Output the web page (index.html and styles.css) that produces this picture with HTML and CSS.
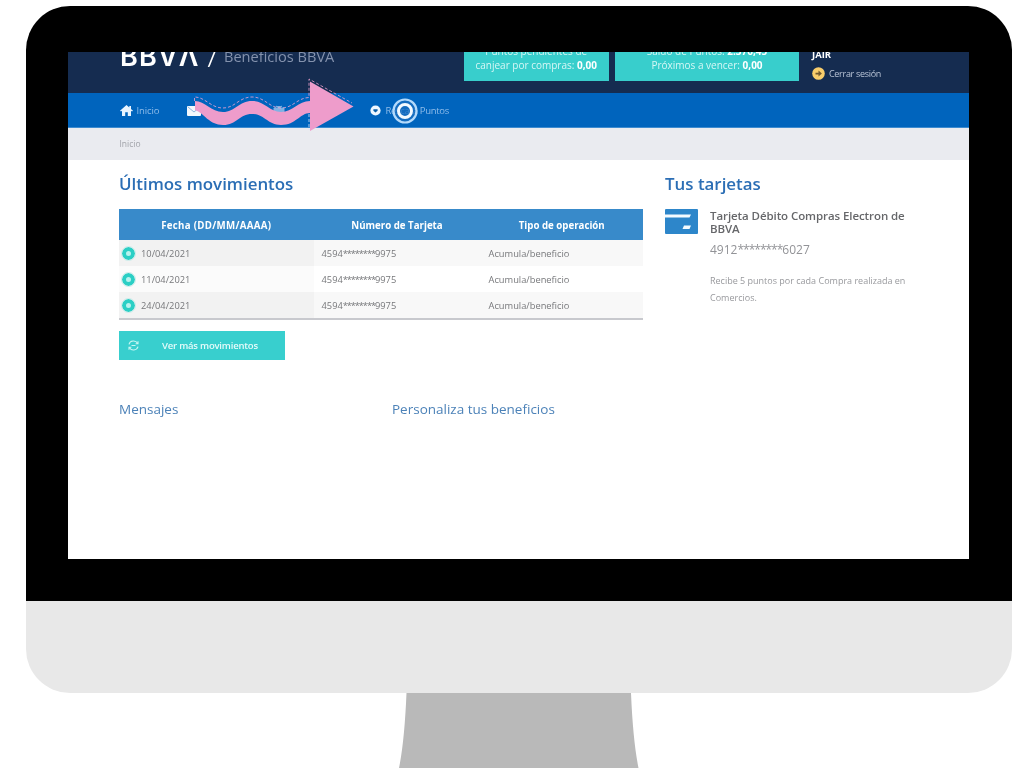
FILE: index.html
```html
<!DOCTYPE html>
<html lang="es">
<head>
<meta charset="utf-8">
<title>Beneficios BBVA</title>
<link rel="stylesheet" href="styles.css">
</head>
<body>
<div class="monitor">
  <div class="bezel">
    <main class="screen">
      <header class="header">
        <div class="brand"><span class="logo">BBVΛ</span><span class="slash">/</span><span class="product">Beneficios BBVA</span></div>
        <div class="box box-pending"><span>Puntos pendientes de</span><span>canjear por compras: <b>0,00</b></span></div>
        <div class="box box-total"><span>Saldo de Puntos: <b>2.376,45</b></span><span>Próximos a vencer: <b>0,00</b></span></div>
        <div class="user">
          <b class="user-name">JAIR</b>
          <a class="logout"><svg width="13" height="13" viewBox="0 0 13 13"><circle cx="6.5" cy="6.5" r="6.3" fill="#f8cd6b"/><path d="M3.5 5.7h3V3.5l3.4 3-3.4 3V7.4h-3z" fill="#735a2e"/></svg><span>Cerrar sesión</span></a>
        </div>
      </header>
      <nav class="nav">
        <a class="nav-home"><svg width="13" height="11" viewBox="0 0 13 11"><path d="M6.5 0 0 5.7l1 .9 1-.8V11h3.2V7.2h2.6V11H11V5.8l1 .8 1-.9-2-1.8V1H9.3v1.4z" fill="#e9f4ff"/></svg><span>Inicio</span></a>
        <svg class="nav-mail" width="14" height="10" viewBox="0 0 14 10"><rect width="14" height="10" rx="1" fill="#f2f7fd"/><path d="m1 1 6 5 6-5" fill="none" stroke="#8fb5de" stroke-width="1"/></svg>
        <svg class="nav-gift" width="12" height="11" viewBox="0 0 12 11"><path d="M1 3h10v7H1zM3 1l3 2 3-2" fill="#7fb2e4" stroke="#7fb2e4"/></svg>
        <a class="nav-points"><svg width="11" height="11" viewBox="0 0 11 11"><circle cx="5.5" cy="5.5" r="5.1" fill="#eef7ff"/><path d="M3.4 4.2h4.2v1.600L5.500 7.400 3.400 5.800z" fill="#075da9"/></svg><span>Rescata Puntos</span></a>
      </nav>
      <div class="crumbs">Inicio</div>
      <div class="content">
        <section class="movements">
          <h1 class="title">Últimos movimientos</h1>
          <div class="table">
            <div class="row head"><span>Fecha (DD/MM/AAAA)</span><span>Número de Tarjeta</span><span>Tipo de operación</span></div>
            <div class="row odd"><span class="date"><i class="dot"></i>10/04/2021</span><span class="card-no">4594<em>********</em>9975</span><span class="kind">Acumula/beneficio</span></div>
            <div class="row"><span class="date"><i class="dot"></i>11/04/2021</span><span class="card-no">4594<em>********</em>9975</span><span class="kind">Acumula/beneficio</span></div>
            <div class="row odd"><span class="date"><i class="dot"></i>24/04/2021</span><span class="card-no">4594<em>********</em>9975</span><span class="kind">Acumula/beneficio</span></div>
          </div>
          <a class="more"><svg width="11" height="11" viewBox="0 0 11 11" fill="none" stroke="#c9f6f3" stroke-width="1.1"><path d="M1 4.3C2 .2 8 0 9.5 3.4M10 1.200v2.500H7.600M10 6.700C9 10.800 3 11 1.500 7.600M1 9.800V7.300h2.400M3.500 5.500h4"/></svg><span>Ver más movimientos</span></a>
          <div class="subheads"><h2>Mensajes</h2><h2>Personaliza tus beneficios</h2></div>
        </section>
        <aside class="cards">
          <h1 class="title">Tus tarjetas</h1>
          <div class="card">
            <svg width="33" height="25" viewBox="0 0 33 25"><rect width="33" height="25" rx="1" fill="#2d86ca"/><path d="M0 5.500h26l-1.500 3H0zM19 16.500h7l-1.500 3.500h-7z" fill="#f5fbff"/></svg>
            <div class="card-text">
              <h3>Tarjeta Débito Compras Electron de BBVA</h3>
              <div class="number">4912<em>********</em>6027</div>
              <p>Recibe 5 puntos por cada Compra realizada en Comercios.</p>
            </div>
          </div>
        </aside>
      </div>
    </main>
  </div>
  <div class="chin"></div>
  <svg class="stand" width="240" height="75" viewBox="0 0 240 75"><path d="M7.500 0H232Q234 48 239.500 75H0Q5.500 48 7.500 0z" fill="#b9b9b9"/></svg>
</div>
<svg class="pointer" width="165" height="60" viewBox="190 75 165 60">
  <path d="M194.500 101V97C205 97 211 108 223 108C235 108 239 97 252 97C265 97 269 108 281 108C293 108 297 98 309 97.500V79L352 103" fill="none" stroke="#f3a5d2" stroke-width=".8" stroke-dasharray="3 2"/>
  <path d="M195 101C205 101 211 112 223 112C235 112 239 101 252 101C265 101 269 112 281 112C293 112 298 101 310 101V81.500L353.500 106.500 310 131V113C300 113 296 125 281 125C267 125 265 114 252 114C239 114 237 125 223 125C209 125 204 113 195 110z" fill="#ee9ccb"/>
  <path d="M309 114v16" stroke="#d8e2fa" stroke-width=".8" stroke-dasharray="3 2"/>
</svg>
<svg class="cursor" width="28" height="28" viewBox="0 0 28 28" fill="none"><circle cx="14" cy="14" r="11.500" fill="#1b6fc0" fill-opacity=".75" stroke="#b4dafb" stroke-width="2.200"/><circle cx="14" cy="14" r="6.500" stroke="#f4faff" stroke-width="3"/></svg>
</body>
</html>
```

FILE: styles.css
```css
* { box-sizing: border-box; }
body { margin: 0; width: 1024px; height: 768px; overflow: hidden; background: #fff; font-family: "Open Sans", "Noto Sans", sans-serif; }
h1, h2, h3, p { margin: 0; }
span, b, h1, h2 { white-space: nowrap; }
svg { display: block; flex: none; }
em { font-style: normal; letter-spacing: -1.1px; }
.monitor { margin: 6px 12px 0 26px; display: flex; flex-direction: column; }
.bezel { height: 595px; padding: 46px 43px 42px 41.500px; background: #000; border-radius: 44px 44px 0 0; }
.chin { height: 92px; background: #e8e8e8; border-radius: 0 0 44px 44px; }
.stand { margin-left: 373px; }
.screen { height: 507px; overflow: hidden; background: #fff; }
.header, .nav, .crumbs, .content { filter: blur(.35px); }
.header { height: 41px; background: #152c50; display: flex; overflow: hidden; color: #fff; }
.brand { width: 396px; padding-left: 52.500px; display: flex; align-items: flex-end; height: 16px; }
.logo { font: 600 27px/26px Inter, sans-serif; width: 86px; margin-bottom: -2px; letter-spacing: 1.200px; }
.slash { font: 400 23px/24px Lato, sans-serif; width: 17px; margin-left: 1px; margin-bottom: -1px; }
.product { font-size: 14.600px; line-height: 20px; color: #8492ad; margin-bottom: 2px; }
.box { height: 28.500px; background: #38cecc; color: #d6f7f5; font-size: 10px; line-height: 14px; display: flex; flex-direction: column; align-items: center; justify-content: flex-end; padding-bottom: 8.500px; }
.box b { color: #fff; }
.box-pending { width: 145.500px; }
.box-total { width: 184px; margin-left: 6px; }
.user { margin-left: 13px; display: flex; flex-direction: column; height: 27.500px; justify-content: flex-end; }
.user-name { font-size: 9.500px; line-height: 12px; margin-bottom: 5.500px; }
.logout { display: flex; align-items: center; gap: 4px; font-size: 9px; letter-spacing: -.3px; line-height: 13px; color: #b9c4d6; }
.nav { height: 34.500px; background: #0064bd; border-bottom: 1px solid #3d8bd0; display: flex; align-items: center; padding: 2px 0 0 52px; font-size: 9.500px; color: #8ebcea; }
.nav a { display: flex; align-items: center; }
.nav-home { width: 67px; gap: 4px; letter-spacing: -.1px; }
.nav-gift { margin-left: 72px; }
.nav-points { margin-left: 85px; gap: 5px; letter-spacing: -.3px; }
.crumbs { height: 32px; background: #eaebf0; padding: 9px 0 0 52px; font-size: 8.500px; line-height: 14px; color: #a1a3a9; }
.content { display: flex; }
.movements { width: 524px; margin-left: 51.500px; }
.title { font-size: 16.900px; font-weight: 600; line-height: 24px; color: #2b6eb5; margin-top: 12px; }
.table { margin-top: 13.500px; border-bottom: 2px solid #c8c9ce; }
.row { display: grid; grid-template-columns: 194.500px 167px 162.500px; grid-template-rows: 100%; height: 26px; font-size: 9.300px; color: #77787b; line-height: 27px; }
.row.head { height: 31px; background: #388aca; color: #fff; font-weight: 700; font-size: 9.700px; line-height: 33px; text-align: center; }
.row.head span:first-child { letter-spacing: .3px; }
.row.odd { background: #f8f8f8; }
.date { background: #fbfbfb; display: flex; align-items: center; padding-left: 3px; }
.odd .date { background: #f2f2f2; }
.dot { width: 13px; height: 13px; border-radius: 50%; border: 4px solid #2bcfc5; outline: 1.500px solid #c9ecea; background: #b9f2ee; margin-right: 6px; }
.card-no { padding-left: 8px; }
.kind { padding-left: 8px; }
.more { display: flex; align-items: center; width: 165.500px; height: 29px; margin-top: 11px; padding-left: 9px; gap: 23px; background: #38cfce; color: #e5fbfa; font-size: 9.500px; font-weight: 600; letter-spacing: -.2px; }
.subheads { display: flex; margin-top: 40px; }
.subheads h2 { flex: none; width: 273px; font-size: 13.500px; line-height: 18px; font-weight: 400; color: #4c82b8; }
.cards { margin-left: 22px; width: 260px; }
.card { display: flex; gap: 12px; margin-top: 13px; }
.card-text { width: 205px; }
.card h3 { font-size: 11.500px; font-weight: 600; letter-spacing: -.08px; line-height: 13.500px; color: #66676a; }
.number { font-size: 12px; line-height: 18px; margin-top: 5px; color: #929397; }
.number em { letter-spacing: -1px; }
.card p { font-size: 9px; line-height: 17.500px; margin-top: 13px; color: #98999d; }
.pointer { position: absolute; left: 190px; top: 75px; }
.cursor { position: absolute; left: 391px; top: 97px; }
```
